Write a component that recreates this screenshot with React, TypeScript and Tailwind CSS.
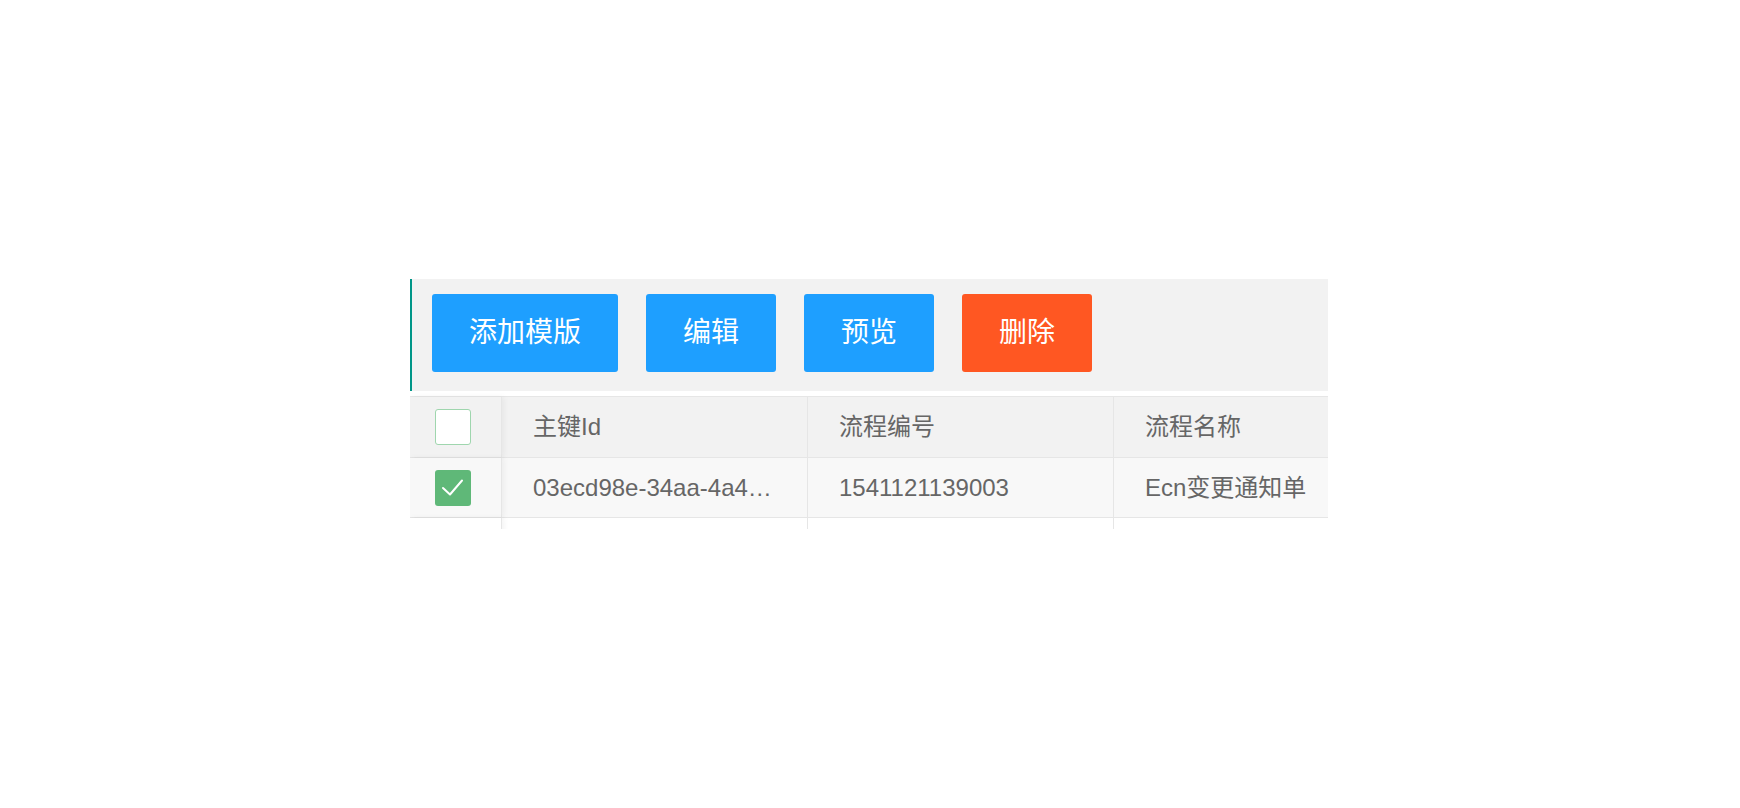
import React from 'react';

const buttons = [
  { label: '添加模版', color: 'bg-[#1E9FFF]' },
  { label: '编辑', color: 'bg-[#1E9FFF]' },
  { label: '预览', color: 'bg-[#1E9FFF]' },
  { label: '删除', color: 'bg-[#FF5722]' }
];

const columns = ['主键Id', '流程编号', '流程名称'];

const rows = [['03ecd98e-34aa-4a4…', '1541121139003', 'Ecn变更通知单']];

function Checkbox({ checked }: { checked?: boolean }) {
  if (checked) {
    return (
      <div className="w-[36px] h-[36px] rounded-[3px] bg-[#5FB878] flex items-center justify-center">
        <svg width="36" height="36" viewBox="0 0 36 36" fill="none">
          <polyline points="8,18 15,24.5 27,10.5" stroke="#fff" strokeWidth="2" strokeLinecap="round" strokeLinejoin="round" />
        </svg>
      </div>
    );
  }
  return <div className="w-[36px] h-[36px] rounded-[3px] bg-white border border-[#9fd6ae]" />;
}

export default function App() {
  return (
    <div
      className="min-h-screen bg-white pt-[279px] pl-[410px]"
      style={{ fontFamily: '"Liberation Sans", "Noto Sans CJK SC", sans-serif' }}
    >
      <div className="w-[918px] h-[250px] overflow-hidden">
        {/* toolbar */}
        <div className="h-[112px] bg-[#f2f2f2] border-l-2 border-[#009688] pl-[20px] pt-[15px] flex items-start gap-[28px]">
          {buttons.map((b) => (
            <button
              key={b.label}
              className={`${b.color} h-[78px] px-[37px] rounded-[3px] text-white text-[28px] leading-[78px] whitespace-nowrap`}
            >
              {b.label}
            </button>
          ))}
        </div>

        {/* table */}
        <div className="mt-[5px] border-t border-[#e6e6e6] w-[1024px] text-[#666] text-[24px]">
          <div className="flex h-[61px] bg-[#f2f2f2] border-b border-[#e6e6e6]">
            <div className="relative z-10 w-[92px] shrink-0 border-r border-[#e6e6e6] pl-[25px] flex items-center bg-[#f2f2f2] shadow-[2px_0_6px_rgba(0,0,0,0.05)]">
              <Checkbox />
            </div>
            {columns.map((c) => (
              <div key={c} className="w-[306px] shrink-0 border-r border-[#e6e6e6] px-[31px] flex items-center">
                <span className="whitespace-nowrap">{c}</span>
              </div>
            ))}
          </div>

          {rows.map((r, i) => (
            <div key={i} className="flex h-[60px] bg-[#f8f8f8] border-b border-[#e6e6e6]">
              <div className="relative z-10 w-[92px] shrink-0 border-r border-[#e6e6e6] pl-[25px] flex items-center bg-[#f8f8f8] shadow-[2px_0_6px_rgba(0,0,0,0.05)]">
                <Checkbox checked />
              </div>
              {r.map((v, j) => (
                <div key={j} className="w-[306px] shrink-0 border-r border-[#e6e6e6] px-[31px] flex items-center">
                  <span className="whitespace-nowrap">{v}</span>
                </div>
              ))}
            </div>
          ))}

          <div className="flex h-[40px] bg-white">
            <div className="relative z-10 w-[92px] shrink-0 border-r border-[#e6e6e6] bg-white shadow-[2px_0_6px_rgba(0,0,0,0.05)]" />
            {columns.map((c) => (
              <div key={c} className="w-[306px] shrink-0 border-r border-[#e6e6e6]" />
            ))}
          </div>
        </div>
      </div>
    </div>
  );
}
